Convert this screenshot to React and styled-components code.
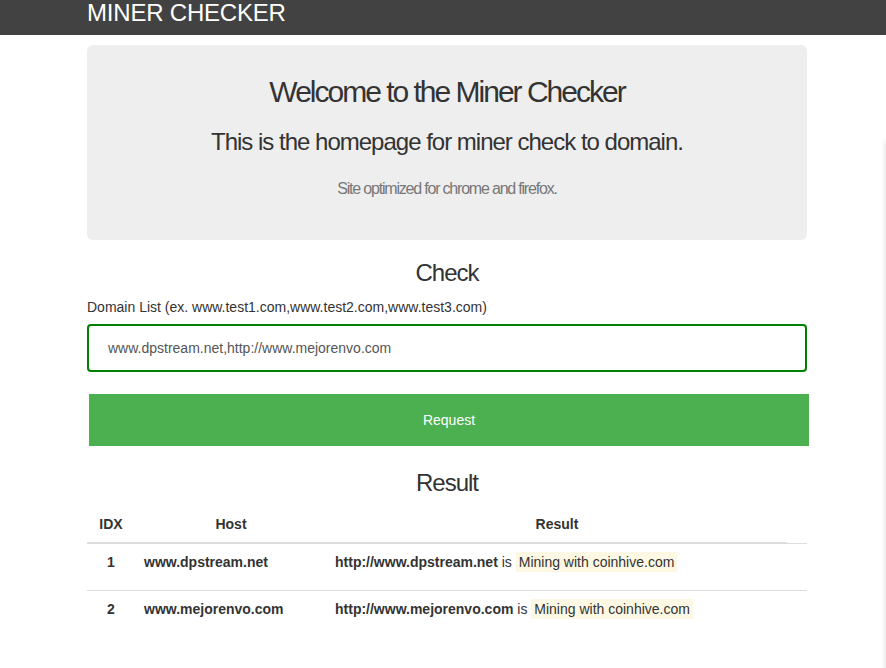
import React from 'react';
import styled, { createGlobalStyle } from 'styled-components';

const GlobalStyle = createGlobalStyle`
  html, body {
    margin: 0;
    padding: 0;
    background: #fff;
  }
  body {
    font-family: "Liberation Sans", Arial, sans-serif;
    font-size: 14px;
    color: #333;
    overflow: hidden;
  }
`;

const rows = [
  { id: 1, host: 'www.dpstream.net', url: 'http://www.dpstream.net', status: 'Mining with coinhive.com' },
  { id: 2, host: 'www.mejorenvo.com', url: 'http://www.mejorenvo.com', status: 'Mining with coinhive.com' },
];

export default function App() {
  return (
    <>
      <GlobalStyle />
      <TopBar>
        <Container>
          <Brand>MINER CHECKER</Brand>
        </Container>
      </TopBar>

      <Container>
        <Jumbotron>
          <Title>Welcome to the Miner Checker</Title>
          <Lead>This is the homepage for miner check to domain.</Lead>
          <Note>Site optimized for chrome and firefox.</Note>
        </Jumbotron>

        <SectionTitle>Check</SectionTitle>
        <Label>Domain List (ex. www.test1.com,www.test2.com,www.test3.com)</Label>
        <DomainInput defaultValue="www.dpstream.net,http://www.mejorenvo.com" />
        <RequestButton>Request</RequestButton>

        <SectionTitle $top={24}>Result</SectionTitle>
        <Table>
          <HeadRow>
            <HeadCell>IDX</HeadCell>
            <HeadCell>Host</HeadCell>
            <HeadCell>Result</HeadCell>
          </HeadRow>
          {rows.map((r) => (
            <Row key={r.id}>
              <Cell $center>{r.id}</Cell>
              <Cell $indent>{r.host}</Cell>
              <Cell>
                {r.url} <Plain>is</Plain> <Mark>{r.status}</Mark>
              </Cell>
            </Row>
          ))}
        </Table>
      </Container>

      <SidePanel />
    </>
  );
}

const TopBar = styled.header`
  background: #424242;
  height: 35px;
  overflow: hidden;
`;

const Container = styled.div`
  width: 720px;
  margin-left: 87px;
`;

const Brand = styled.div`
  color: #fff;
  font-size: 24px;
  line-height: 24px;
  padding-top: 1px;
  letter-spacing: -0.2px;
`;

const Jumbotron = styled.section`
  margin-top: 10px;
  height: 195px;
  background: #eee;
  border-radius: 6px;
  text-align: center;
  box-sizing: border-box;
  padding-top: 30px;
`;

const Title = styled.h1`
  margin: 0;
  font-weight: normal;
  font-size: 30px;
  line-height: 34px;
  letter-spacing: -2px;
  color: #333;
`;

const Lead = styled.h2`
  margin: 19px 0 0;
  font-weight: normal;
  font-size: 24px;
  line-height: 28px;
  letter-spacing: -1px;
  color: #333;
`;

const Note = styled.p`
  margin: 23px 0 0;
  font-size: 16px;
  line-height: 20px;
  letter-spacing: -1.2px;
  color: #777;
`;

const SectionTitle = styled.h3`
  margin: ${(p) => p.$top || 20}px 0 0;
  font-weight: normal;
  font-size: 24px;
  line-height: 26px;
  letter-spacing: -1px;
  text-align: center;
  color: #333;
`;

const Label = styled.div`
  margin-top: 13px;
  font-size: 14px;
  line-height: 16px;
  color: #333;
`;

const DomainInput = styled.input`
  display: block;
  box-sizing: border-box;
  width: 720px;
  height: 48px;
  margin-top: 9px;
  padding: 0 19px;
  border: 2px solid #008000;
  border-radius: 4px;
  font-family: "Liberation Sans", Arial, sans-serif;
  font-size: 14px;
  color: #555;
  outline: none;
`;

const RequestButton = styled.button`
  display: block;
  width: 720px;
  height: 52px;
  margin: 22px 0 0 2px;
  border: none;
  background: #4caf50;
  color: #fff;
  font-family: "Liberation Sans", Arial, sans-serif;
  font-size: 14px;
  cursor: pointer;
`;

const Table = styled.div`
  margin-top: 10px;
  width: 720px;
`;

const columns = '48px 192px 460px';

const HeadRow = styled.div`
  display: grid;
  grid-template-columns: ${columns} 20px;
  border-bottom: 1px solid #ddd;
  position: relative;

  &::after {
    content: '';
    position: absolute;
    left: 0;
    bottom: -1px;
    width: 700px;
    height: 2px;
    background: #ddd;
  }
`;

const HeadCell = styled.div`
  padding: 8px 8px 9px;
  line-height: 20px;
  font-weight: bold;
  text-align: center;
`;

const Row = styled.div`
  display: grid;
  grid-template-columns: ${columns} 20px;
  & + & {
    border-top: 1px solid #ddd;
  }
`;

const Cell = styled.div`
  padding: 8px 8px 18px ${(p) => (p.$indent ? 9 : 8)}px;
  line-height: 20px;
  font-weight: bold;
  white-space: nowrap;
  text-align: ${(p) => (p.$center ? 'center' : 'left')};
`;

const Plain = styled.span`
  font-weight: normal;
`;

const Mark = styled.mark`
  font-weight: normal;
  background: #fcf8e3;
  color: #333;
  padding: 2px 3px;
`;

const SidePanel = styled.div`
  position: fixed;
  left: 886px;
  top: 141px;
  width: 40px;
  height: 600px;
  background: #fff;
  box-shadow: -1px 0 5px rgba(0, 0, 0, 0.12);
`;
